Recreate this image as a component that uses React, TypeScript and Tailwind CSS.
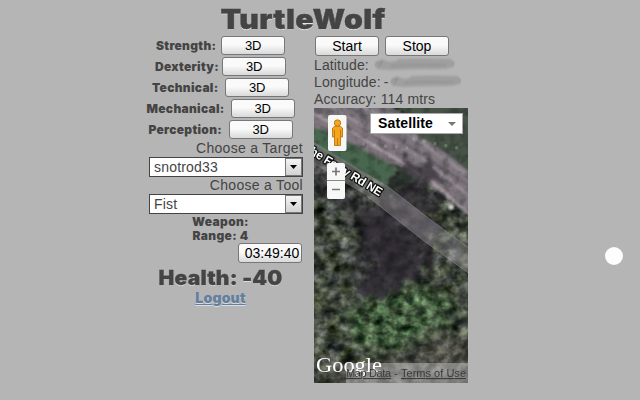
import React from 'react';

const heavy = "font-['Inter','Open_Sans',sans-serif] font-black text-[#444]";
const sans = "font-['Liberation_Sans',Arial,sans-serif]";
const button =
  'rounded-[3px] border border-[#777] bg-linear-to-b from-[#fafafa] from-45% to-[#d9d9d9] text-center text-black';

const stats = [
  { name: 'Strength:', width: 'w-[60px]' },
  { name: 'Dexterity:', width: 'w-[62px]' },
  { name: 'Technical:', width: 'w-[68px]' },
  { name: 'Mechanical:', width: 'w-[79px]' },
  { name: 'Perception:', width: 'w-[75px]' },
];

function Select({ value }: { value: string }) {
  return (
    <div className={`${sans} flex h-5 w-[154px] border-[1.5px] border-[#444] bg-white text-[14px] leading-[18px] tracking-[0.2px] text-[#444]`}>
      <span className="flex-1 pl-[4px]">{value}</span>
      <span className="flex w-[17px] items-center justify-center border border-[#777] bg-linear-to-b from-[#f4f4f4] to-[#d2d2d2]">
        <svg width="7" height="4" viewBox="0 0 7 4"><path d="M0 0H7L3.5 4Z" fill="#000" /></svg>
      </span>
    </div>
  );
}

function SatelliteMap() {
  return (
    <svg className="block" width="154" height="275" viewBox="0 0 154 275">
      <defs>
        <filter id="trees" x="0" y="0" width="100%" height="100%" colorInterpolationFilters="sRGB">
          <feTurbulence type="fractalNoise" baseFrequency="0.075 0.09" numOctaves="3" seed="14" />
          <feColorMatrix values=".95 .12 .05 0 -.24  .95 .17 .05 0 -.24  .9 .05 .2 0 -.28  0 0 0 0 1" />
        </filter>
        <filter id="grass" x="0" y="0" width="100%" height="100%" colorInterpolationFilters="sRGB">
          <feTurbulence type="fractalNoise" baseFrequency="0.08 0.11" numOctaves="3" seed="23" />
          <feColorMatrix values="1 .1 0 0 -.25  1.1 .3 0 0 -.28  .9 .15 0 0 -.25  0 0 0 0 1" />
        </filter>
        <filter id="grain" x="0" y="0" width="100%" height="100%" colorInterpolationFilters="sRGB">
          <feTurbulence type="fractalNoise" baseFrequency="0.11" numOctaves="3" seed="5" />
          <feColorMatrix values="0 0 0 0 .04  0 0 0 0 .07  0 0 0 0 .05  2.8 0 0 0 -1.2" />
        </filter>
        <filter id="soft" x="-30%" y="-30%" width="160%" height="160%"><feGaussianBlur stdDeviation="6" /></filter>
        <filter id="edge" x="-20%" y="-20%" width="140%" height="140%"><feGaussianBlur stdDeviation="1" /></filter>
        <filter id="rough" x="-20%" y="-20%" width="140%" height="140%">
          <feTurbulence type="fractalNoise" baseFrequency="0.08" numOctaves="3" seed="8" />
          <feDisplacementMap in="SourceGraphic" scale="38" xChannelSelector="R" yChannelSelector="G" />
          <feGaussianBlur stdDeviation="1.8" />
        </filter>
        <mask id="meadow">
          <path d="M32 208L58 184L100 176L138 190L136 212L110 230L75 244L44 240Z" fill="#fff" filter="url(#soft)" />
        </mask>
      </defs>
      <rect width="154" height="275" filter="url(#trees)" />
      <rect width="154" height="275" fill="#343b32" opacity=".12" />
      <g mask="url(#meadow)" opacity=".8"><rect width="154" height="275" filter="url(#grass)" /></g>
      <g filter="url(#soft)">
        <path d="M0 55L40 85L100 125L114 160L60 192L36 180L45 120L0 80Z" fill="#302633" opacity=".55" />
        <path d="M120 228H154V275H0V262L90 248Z" fill="#857374" opacity=".35" />
      </g>
      <rect width="154" height="275" filter="url(#grain)" opacity=".4" />
      <g filter="url(#edge)">
        <path d="M-4 -4H20L66 21L100 33L158 73V110L122 82L84 58L-4 36Z" fill="#80777e" />
        <path d="M-4 18L26 29L83 60L71 77L34 56L-4 36Z" fill="#4a6650" />
        <path d="M20 -4H72L100 12L158 50V73L98 33L66 22Z" fill="#7b757b" />
        <path d="M86 -4H158V66L132 45L100 24Z" fill="#475347" />
        <path d="M-4 4L40 26L86 53L120 76L158 108" fill="none" stroke="#a59ca2" strokeWidth="3" />
        <path d="M14 -4L60 25L108 50L158 90" fill="none" stroke="#968d95" strokeWidth="3" />
        <path d="M45 -4L94 25L158 70" fill="none" stroke="#918990" strokeWidth="4" />
        <path d="M30 -4L80 28L158 80" fill="none" stroke="#6c666d" strokeWidth="3" />
      </g>
      <g filter="url(#rough)">
        <path d="M92 52L112 57L124 76L126 100L118 112L122 126L116 150L98 170L76 184L50 196L42 182L60 164L52 144L48 112L72 95L82 72Z" fill="#302934" opacity=".68" />
        <path d="M74 72L90 65L88 84L76 86Z" fill="#2c342d" />
      </g>
      <rect width="154" height="275" filter="url(#grain)" opacity=".28" />
      <path d="M0 34L72 77L117 112L154 139V165L110 133L53 88L0 56Z" fill="#a09aa3" opacity=".4" />
      <path d="M53 88L110 133L154 165M72 77L117 112L154 139" fill="none" stroke="#aaa2a9" strokeWidth=".7" opacity=".5" />
      <path d="M48 36L94 40M98 31L144 40" stroke="#bdc5bb" strokeWidth="3" strokeDasharray="3 8" opacity=".3" />
      <circle cx="137" cy="99" r="3" fill="#d0cdc6" filter="url(#edge)" />
      <text x="-8" y="43.5" transform="rotate(31.5 -8 43.5)" className={sans} fontSize="12" fontWeight="700" stroke="#111" strokeWidth="2.5" strokeLinejoin="round" paintOrder="stroke" fill="#fff" textLength="86">the Ferry Rd NE</text>
      <rect x="14" y="7" width="18.5" height="36" rx="2" fill="#f7f7f5" />
      <path d="M18.5 20Q20 18 23.5 18Q27 18 28.5 20V29H26.5V37.5H20.5V29H18.5Z" fill="#f5a51b" stroke="#b36a0d" strokeWidth=".8" />
      <circle cx="23.5" cy="15" r="3.2" fill="#f5a51b" stroke="#b36a0d" strokeWidth=".8" />
      <path d="M23.5 30V37M20.5 22V29M26.5 22V29" fill="none" stroke="#b36a0d" strokeWidth=".7" />
      <rect x="13" y="55" width="18" height="36" rx="2" fill="#f7f7f7" />
      <path d="M13 72.5H31" stroke="#888" />
      <path d="M18 63.5H26M22 59.5V67.5M18 81.5H26" stroke="#777" strokeWidth="1.7" />
      <rect x="32" y="255" width="122" height="20" fill="#bbb" opacity=".5" />
      <text x="2" y="264" fontFamily="Liberation Serif, serif" fontSize="22" fill="#fff" textLength="66" lengthAdjust="spacingAndGlyphs">Google</text>
      <g className={sans} fontSize="11" fill="#3b3b3b">
        <text x="32" y="269" textDecoration="underline" textLength="45">Map Data</text>
        <text x="80" y="269">-</text>
        <text x="87" y="269" textDecoration="underline" textLength="65">Terms of Use</text>
      </g>
    </svg>
  );
}

function Redaction({ width }: { width: number }) {
  return (
    <svg className="shrink-0" width={width} height="15" viewBox="0 0 86 15" preserveAspectRatio="none">
      <defs><filter id="smudge"><feGaussianBlur stdDeviation=".8" /></filter></defs>
      <g filter="url(#smudge)">
        <path d="M2 6Q7 1 14 4Q21 6 27 2Q48 1 79 2Q87 5 82 10Q72 13 53 12L18 13L5 12Q0 9 2 6Z" fill="#9f9f9f" />
        <path d="M3 6L10 4L6 10M18 9Q40 7 75 8" stroke="#929292" strokeWidth="1.5" fill="none" />
      </g>
    </svg>
  );
}

export default function App() {
  return (
    <main className="flex h-[400px] w-[640px] overflow-hidden bg-[#b5b5b5]">
      <div className="ml-[138px] w-[330px]">
        <h1 className={`${heavy} h-9 scale-x-[1.12] pt-[2px] text-center text-[27px] leading-[36px] tracking-[0.3px] whitespace-nowrap [-webkit-text-stroke:0.4px_#444] [text-shadow:0_1px_0_#e6e6e6]`}>TurtleWolf</h1>
        <div className="flex gap-[11px]">
          <section className="w-[165px]">
            {stats.map((stat) => (
              <div key={stat.name} className="flex h-[21px] items-start justify-center gap-[5px]">
                <span className={`${heavy} ${stat.width} text-[12px] leading-[19px] tracking-[0.3px] whitespace-nowrap`}>{stat.name}</span>
                <button className={`${button} ${sans} h-[19px] w-16 text-[13px] leading-[17px] tracking-[-0.3px]`}>3D</button>
              </div>
            ))}
            <div className={`${sans} h-4 text-right text-[14px] leading-[14px] tracking-[0.3px] text-[#444]`}>Choose a Target</div>
            <div className="flex justify-end"><Select value="snotrod33" /></div>
            <div className={`${sans} h-[17px] text-right text-[14px] leading-[16px] tracking-[0.3px] text-[#444]`}>Choose a Tool</div>
            <div className="flex justify-end"><Select value="Fist" /></div>
            <div className={`${heavy} pt-px text-center text-[12px] leading-[14px] tracking-[0.35px]`}><div>Weapon:</div><div>Range: 4</div></div>
            <div className="flex justify-end pr-px"><div className={`${button} ${sans} h-5 w-16 text-[14px] leading-[19px]`}><span className="pl-1">03:49:40</span></div></div>
            <div className={`${heavy} h-7 scale-x-[1.05] text-center text-[20px] leading-[30px] tracking-[0.2px] whitespace-nowrap [-webkit-text-stroke:0.3px_#444] [text-shadow:0_1px_0_#ddd]`}>Health: -40</div>
            <div className={`${heavy} text-center text-[14px] leading-[14px] tracking-[0.2px]`}><a className="text-[#627f9d] underline [text-shadow:0_1px_0_#ddd]">Logout</a></div>
          </section>
          <section className="w-[154px]">
            <div className={`${sans} flex gap-[6px] pl-px text-[14px]`}>
              <button className={`${button} h-5 w-16 leading-[18px]`}>Start</button>
              <button className={`${button} h-5 w-16 leading-[18px]`}>Stop</button>
            </div>
            <div className={`${sans} text-[14px] leading-[18px] tracking-[0.13px] whitespace-nowrap text-[#444]`}>
              <div className="flex h-[17px] items-center gap-1">Latitude: <Redaction width={84} /></div>
              <div className="flex h-[17px] items-center"><span className="mr-[3px]">Longitude:</span>-<Redaction width={74} /></div>
              <div className="h-[18px]">Accuracy: 114 mtrs</div>
            </div>
            <div className="relative h-[275px] w-[154px] overflow-hidden">
              <SatelliteMap />
              <div className={`${sans} absolute top-[5px] left-14 flex h-[21px] w-[93px] items-center justify-between border border-[#aaa] bg-white pr-[6px] pl-[7px] text-[14px] font-bold tracking-[0.15px] text-black`}>
                Satellite
                <svg width="8" height="4" viewBox="0 0 8 4"><path d="M0 0H8L4 4Z" fill="#777" /></svg>
              </div>
            </div>
          </section>
        </div>
      </div>
      <div className="mt-[247px] ml-[137px] size-[18px] rounded-full bg-[#fdfdfd]" />
    </main>
  );
}
